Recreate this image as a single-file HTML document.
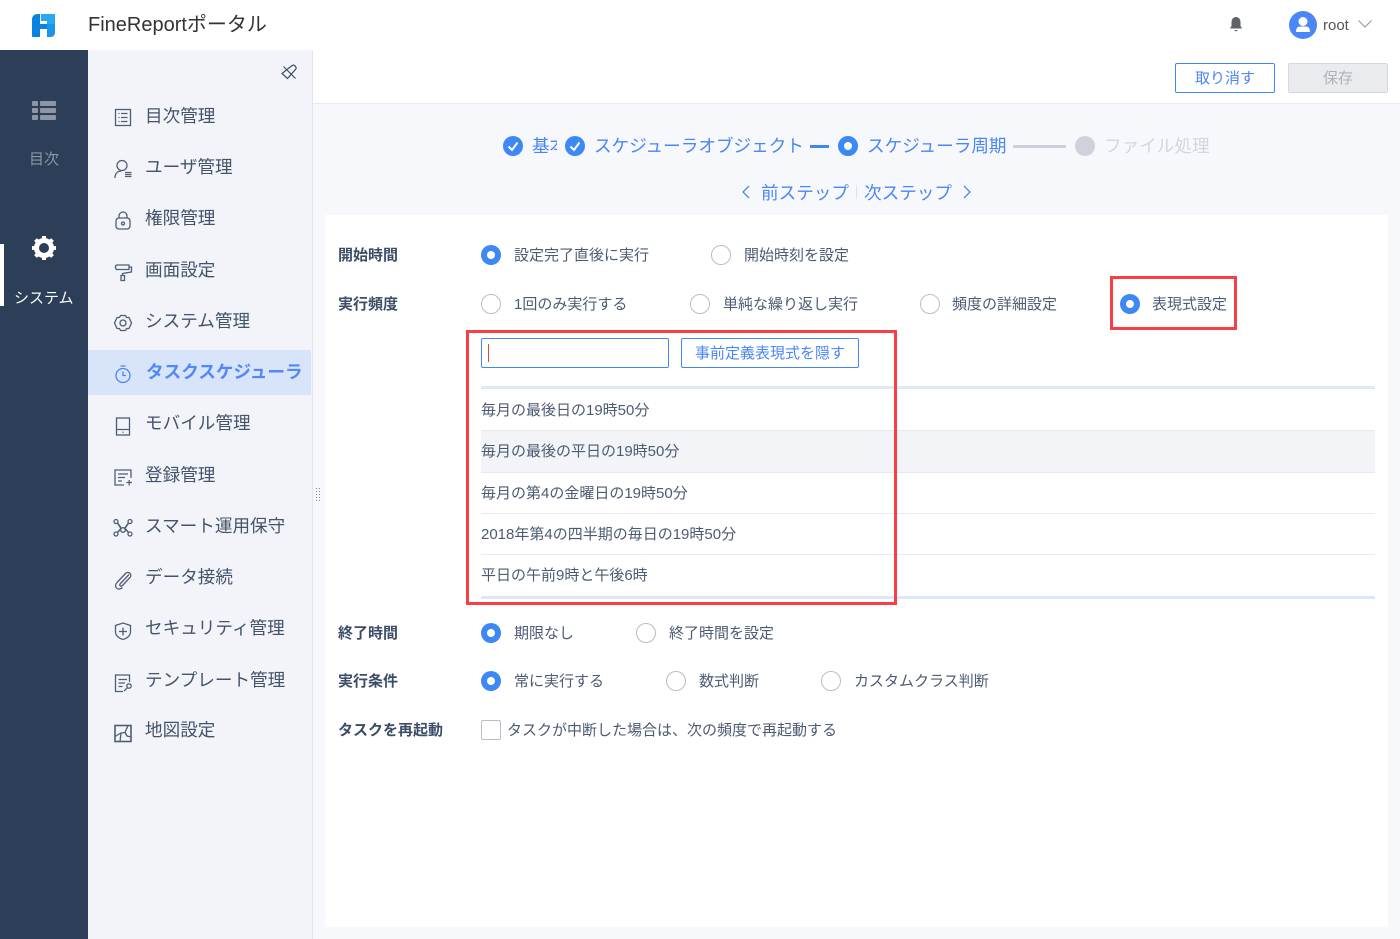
<!DOCTYPE html>
<html lang="ja"><head><meta charset="utf-8"><title>FineReport</title>
<style>
html,body{margin:0;padding:0;width:1400px;height:939px;overflow:hidden;background:#fff}
body{position:relative;font-family:"Liberation Sans","Noto Sans CJK SC","Noto Sans CJK JP",sans-serif;color:#3d4d66}
.a,.t{position:absolute}
.t{white-space:nowrap;line-height:20px}
.m{font-size:17.6px;color:#45536a;left:145px;line-height:24px}
.i{position:absolute;left:113px;width:20px;height:20px;fill:none;stroke:#4f5d75;stroke-width:1.3}
.l{font-size:15px;font-weight:bold;left:338px;color:#3d4d66;line-height:22px}
.o{font-size:15px;color:#4d5b72;line-height:22px}
.r{position:absolute;width:18px;height:18px;border:1px solid #b8bec8;border-radius:50%;background:#fff}
.c{position:absolute;width:20px;height:20px;border-radius:50%;background:#3d88f5}
.c:after{content:"";position:absolute;left:6px;top:6px;width:8px;height:8px;border-radius:50%;background:#fff}
.li{font-size:15px;color:#4d5b72;left:481px;line-height:22px}
.s{font-size:17.6px;color:#4a86f5}
.hl{position:absolute;left:481px;width:894px;height:1px;background:#e8ebf0}
</style></head><body>
<div class="a" style="left:0;top:50px;width:88px;height:889px;background:#2c3e58"></div>
<div class="a" style="left:88px;top:50px;width:224px;height:889px;background:#f2f4f9"></div>
<div class="a" style="left:312px;top:50px;width:1px;height:889px;background:#e2e5ea"></div>
<div class="a" style="left:313px;top:50px;width:1087px;height:54px;background:#fff;border-bottom:1px solid #e8eaee;box-sizing:border-box"></div>
<div class="a" style="left:313px;top:104px;width:1087px;height:835px;background:#f7f8fb"></div>
<div class="a" style="left:325px;top:215px;width:1063px;height:712px;background:#fff"></div>

<svg class="a" style="left:32px;top:14px" width="24" height="24" viewBox="0 0 24 24"><path d="M0 6Q0 0 6 0H8V23H1Q0 23 0 22ZM8 10H16V15H8Z" fill="#0a83e0"/><path d="M9 0H23V18Q23 23 18 23H15V7H9Z" fill="#2aa9ee"/><path d="M15 10H23V18Q23 23 18 23H15Z" fill="#1c97e8"/></svg>
<div class="t" style="left:88px;top:13px;font-size:20px;line-height:24px;color:#333">FineReportポータル</div>

<svg class="a" style="left:1228px;top:16px" width="16" height="17" viewBox="0 0 16 17"><path d="M8 1C5 1 3.5 3.5 3.500 6.500V10L2 12.500H14L12.500 10V6.500C12.500 3.500 11 1 8 1Z" fill="#5f6268"/><path d="M6 14H10L8 15.500Z" fill="#5f6268"/></svg>
<div class="a" style="left:1289px;top:11px;width:28px;height:28px;border-radius:50%;background:#4a86f8"></div>
<svg class="a" style="left:1289px;top:11px" width="28" height="28" viewBox="0 0 28 28"><circle cx="14" cy="10.500" r="4.500" fill="#fff"/><path d="M7 21Q7 15.500 11 15.500H17Q21 15.500 21 21Z" fill="#fff"/></svg>
<div class="t" style="left:1323px;top:16px;font-size:15px;color:#555">root</div>
<svg class="a" style="left:1357px;top:19px" width="16" height="10" viewBox="0 0 16 10"><path d="M1.500 1.500L8 8L14.500 1.500" fill="none" stroke="#9aa0aa" stroke-width="1.200"/></svg>

<svg class="a" style="left:31px;top:100px" width="26" height="22" viewBox="0 0 26 22" fill="#8d96a6"><rect x="1" y="1" width="6" height="5" rx="1"/><rect x="9" y="1" width="16" height="5" rx="1"/><rect x="1" y="8" width="6" height="5" rx="1"/><rect x="9" y="8" width="16" height="5" rx="1"/><rect x="1" y="15" width="6" height="5" rx="1"/><rect x="9" y="15" width="16" height="5" rx="1"/></svg>
<div class="t" style="left:29px;top:150px;font-size:15px;color:#8d96a6">目次</div>
<div class="a" style="left:0;top:244px;width:4px;height:62px;background:#fff"></div>
<svg class="a" style="left:31px;top:235px" width="26" height="26" viewBox="0 0 26 26"><circle cx="13" cy="13" r="7.500" fill="none" stroke="#fff" stroke-width="5"/><g stroke="#fff" stroke-width="4"><path d="M13 1V5M13 21V25M1 13H5M21 13H25M4.500 4.500L7.300 7.300M18.700 18.700L21.500 21.500M4.500 21.500L7.300 18.700M18.700 7.300L21.500 4.500"/></g></svg>
<div class="t" style="left:14px;top:289px;font-size:15px;color:#fff">システム</div>

<svg class="a" style="left:280px;top:63px" width="18" height="18" viewBox="0 0 18 18" fill="none" stroke="#3d4d66" stroke-width="1.200"><path d="M2 10.500L11.500 3Q14 1 15.500 3.500Q17 5.500 15 7L7.500 15.500ZM3.500 3.500L15.500 15.500"/></svg>

<svg class="i" style="top:107px" viewBox="0 0 20 20"><rect x="2.500" y="2.500" width="15" height="16"/><path d="M5.500 6.500H6.500M8 6.500H14.500M5.500 10.500H6.500M8 10.500H14.500M5.500 14.500H6.500M8 14.500H14.500"/></svg>
<div class="t m" style="top:104px">目次管理</div>
<svg class="i" style="top:159px" viewBox="0 0 20 20"><circle cx="9" cy="6.500" r="5"/><path d="M2 19C2 14.500 4.500 12 8.500 12M12 13.500H18.500M12 15.500H18.500M12 17.500H18.500"/></svg>
<div class="t m" style="top:155px">ユーザ管理</div>
<svg class="i" style="top:210px" viewBox="0 0 20 20"><rect x="3" y="8" width="14" height="11" rx="3"/><path d="M6 8V6A4 4 0 0 1 14 6V8"/><circle cx="10" cy="13.500" r="1.500"/></svg>
<div class="t m" style="top:206px">権限管理</div>
<svg class="i" style="top:262px" viewBox="0 0 20 20"><path d="M3.500 3H16V7.500H3.500L2.500 6V4ZM16 5H18.500V10L9.500 11.500V13M8 13.500H11.500V18.500H8Z"/></svg>
<div class="t m" style="top:258px">画面設定</div>
<svg class="i" style="top:313px" viewBox="0 0 20 20"><path d="M7.500 2.500H12.500L13.500 4.500L16 4.500L18.500 10L16 15.500L13.500 15.500L12.500 17.500H7.500L6.500 15.500L4 15.500L1.500 10L4 4.500L6.500 4.500Z" stroke-linejoin="round"/><circle cx="10" cy="10" r="3"/></svg>
<div class="t m" style="top:309px">システム管理</div>

<div class="a" style="left:88px;top:350px;width:223px;height:45px;background:#d8e4f9"></div>
<svg class="i" style="top:364px;stroke:#4a86f5" viewBox="0 0 20 20"><circle cx="10" cy="11.500" r="7"/><path d="M10 7.500V11.500H13M7.500 2H12.500"/></svg>
<div class="t m" style="top:360px;left:146px;font-size:17.6px;font-weight:bold;color:#5288f7">タスクスケジューラ</div>

<svg class="i" style="top:416px" viewBox="0 0 20 20"><rect x="3.500" y="2" width="13" height="17"/><path d="M3.500 13.500H16.500M9.500 16.300H10.500"/></svg>
<div class="t m" style="top:411px">モバイル管理</div>
<svg class="i" style="top:467px" viewBox="0 0 20 20"><path d="M18 11V3H2V18H11M5 7H15M5 10.500H12M5 14H9M13.500 15.500H19M16.200 13V18.500"/></svg>
<div class="t m" style="top:463px">登録管理</div>
<svg class="i" style="top:518px" viewBox="0 0 20 20"><circle cx="3" cy="3.500" r="2"/><circle cx="17" cy="3.500" r="2"/><circle cx="3" cy="16" r="2"/><circle cx="17" cy="16" r="2"/><circle cx="10" cy="12" r="2.300"/><path d="M4.500 5L8.300 10.500M15.500 5L11.700 10.500M4.500 14.500L8 10.500M15.500 14.500L12 10.500" stroke-width="1.600"/></svg>
<div class="t m" style="top:514px">スマート運用保守</div>
<svg class="i" style="top:570px" viewBox="0 0 20 20"><path d="M16 4.500L7.500 13.500C5.500 15.500 8 17 9.500 15.500L17 7.500C19.500 4.500 15.500 .5 12.500 3.500L4 12.500C0 17 5.500 21.500 9.500 17.500"/></svg>
<div class="t m" style="top:565px">データ接続</div>
<svg class="i" style="top:621px" viewBox="0 0 20 20"><path d="M10 2L17.500 4.500V11C17.500 15 13.500 17.500 10 18.500C6.500 17.500 2.500 15 2.500 11V4.500ZM6 10.500H14M10 6.500V14.500"/></svg>
<div class="t m" style="top:616px">セキュリティ管理</div>
<svg class="i" style="top:673px" viewBox="0 0 20 20"><path d="M16.500 9V2H2.500V18.500H10M5.500 6.500H14M5.500 10H12M5.500 13.500H9.500"/><circle cx="16" cy="13" r="2.200"/><path d="M14.500 14.700L11 18"/></svg>
<div class="t m" style="top:668px">テンプレート管理</div>
<svg class="i" style="top:723px" viewBox="0 0 20 20"><rect x="2" y="2.500" width="16" height="16" stroke-width="1.600"/><path d="M2 13.500L8 10L12 9.500L15 2.500M12 9.500L14 13L18 14M8 10L7 18.500"/></svg>
<div class="t m" style="top:718px">地図設定</div>

<svg class="a" style="left:315px;top:487px" width="7" height="16" fill="#7b8593"><path d="M1 1h1v1H1zM4 1h1v1H4zM1 4h1v1H1zM4 4h1v1H4zM1 7h1v1H1zM4 7h1v1H4zM1 10h1v1H1zM4 10h1v1H4zM1 13h1v1H1zM4 13h1v1H4z"/></svg>

<div class="a" style="left:1175px;top:63px;width:100px;height:30px;box-sizing:border-box;border:1px solid #3d88f5;border-radius:2px;background:#fff;color:#4a86f5;font-size:15px;text-align:center;line-height:30px">取り消す</div>
<div class="a" style="left:1288px;top:63px;width:100px;height:30px;box-sizing:border-box;border:1px solid #d4d7dc;border-radius:2px;background:#eaebef;color:#adb1b8;font-size:15px;text-align:center;line-height:30px">保存</div>

<svg class="a" style="left:503px;top:136px" width="20" height="20"><circle cx="10" cy="10" r="10" fill="#3d88f5"/><path d="M5.500 10.500L9 14L14.500 6.500" fill="none" stroke="#fff" stroke-width="2"/></svg>
<div class="a" style="left:532px;top:133px;width:25px;height:26px;overflow:hidden"><div class="t s" style="left:0;top:3px">基本設定</div></div>
<svg class="a" style="left:565px;top:136px" width="20" height="20"><circle cx="10" cy="10" r="10" fill="#3d88f5"/><path d="M5.500 10.500L9 14L14.500 6.500" fill="none" stroke="#fff" stroke-width="2"/></svg>
<div class="t s" style="left:594px;top:136px">スケジューラオブジェクト</div>
<div class="a" style="left:810px;top:145px;width:19px;height:3px;background:#3d88f5"></div>
<div class="a" style="left:838px;top:136px;width:20px;height:20px;border-radius:50%;box-sizing:border-box;border:6px solid #3d88f5;background:#fff"></div>
<div class="t s" style="left:867px;top:136px">スケジューラ周期</div>
<div class="a" style="left:1013px;top:145px;width:53px;height:3px;background:#ccd0d8"></div>
<div class="a" style="left:1075px;top:136px;width:20px;height:20px;border-radius:50%;background:#cfd2da"></div>
<div class="t s" style="left:1104px;top:136px;color:#d3d6dc">ファイル処理</div>

<svg class="a" style="left:740px;top:184px" width="12" height="16"><path d="M9 2L3 8L9 14" fill="none" stroke="#4a86f5" stroke-width="1.300"/></svg>
<div class="t s" style="left:761px;top:183px">前ステップ</div>
<div class="a" style="left:856px;top:185px;width:1px;height:14px;background:#dfe3ea"></div>
<div class="t s" style="left:864px;top:183px">次ステップ</div>
<svg class="a" style="left:961px;top:184px" width="12" height="16"><path d="M3 2L9 8L3 14" fill="none" stroke="#4a86f5" stroke-width="1.300"/></svg>

<div class="t l" style="top:245px">開始時間</div>
<div class="c" style="left:481px;top:245px"></div><div class="t o" style="left:514px;top:245px">設定完了直後に実行</div>
<div class="r" style="left:711px;top:245px"></div><div class="t o" style="left:744px;top:245px">開始時刻を設定</div>

<div class="t l" style="top:294px">実行頻度</div>
<div class="r" style="left:481px;top:294px"></div><div class="t o" style="left:514px;top:294px">1回のみ実行する</div>
<div class="r" style="left:690px;top:294px"></div><div class="t o" style="left:723px;top:294px">単純な繰り返し実行</div>
<div class="r" style="left:920px;top:294px"></div><div class="t o" style="left:952px;top:294px">頻度の詳細設定</div>
<div class="c" style="left:1120px;top:294px"></div><div class="t o" style="left:1152px;top:294px">表現式設定</div>
<div class="a" style="left:1110px;top:276px;width:127px;height:54px;box-sizing:border-box;border:3px solid #f73f45"></div>

<div class="a" style="left:481px;top:338px;width:188px;height:30px;box-sizing:border-box;border:1px solid #3d88f5;border-radius:2px;background:#fff"></div>
<div class="a" style="left:488px;top:344px;width:1px;height:18px;background:#e0433a"></div>
<div class="a" style="left:681px;top:338px;width:178px;height:30px;box-sizing:border-box;border:1px solid #3d88f5;border-radius:2px;background:#fff;color:#4a86f5;font-size:15px;text-align:center;line-height:30px">事前定義表現式を隠す</div>

<div class="a" style="left:481px;top:386px;width:894px;height:3px;background:#dde9f7"></div>
<div class="t li" style="top:400px">毎月の最後日の19時50分</div>
<div class="a" style="left:481px;top:430px;width:894px;height:43px;box-sizing:border-box;background:#f2f4f8;border-top:1px solid #e6e9ee;border-bottom:1px solid #e6e9ee"></div>
<div class="t li" style="top:441px">毎月の最後の平日の19時50分</div>
<div class="t li" style="top:483px">毎月の第4の金曜日の19時50分</div>
<div class="hl" style="top:513px"></div>
<div class="t li" style="top:524px">2018年第4の四半期の毎日の19時50分</div>
<div class="hl" style="top:554px"></div>
<div class="t li" style="top:565px">平日の午前9時と午後6時</div>
<div class="a" style="left:481px;top:596px;width:894px;height:3px;background:#dde9f7"></div>
<div class="a" style="left:466px;top:330px;width:431px;height:275px;box-sizing:border-box;border:3px solid #f73f45"></div>

<div class="t l" style="top:623px">終了時間</div>
<div class="c" style="left:481px;top:623px"></div><div class="t o" style="left:514px;top:623px">期限なし</div>
<div class="r" style="left:636px;top:623px"></div><div class="t o" style="left:669px;top:623px">終了時間を設定</div>

<div class="t l" style="top:671px">実行条件</div>
<div class="c" style="left:481px;top:671px"></div><div class="t o" style="left:514px;top:671px">常に実行する</div>
<div class="r" style="left:666px;top:671px"></div><div class="t o" style="left:699px;top:671px">数式判断</div>
<div class="r" style="left:821px;top:671px"></div><div class="t o" style="left:854px;top:671px">カスタムクラス判断</div>

<div class="t l" style="top:720px">タスクを再起動</div>
<div class="a" style="left:481px;top:720px;width:20px;height:20px;box-sizing:border-box;border:1px solid #b8bec8;border-radius:2px;background:#fff"></div>
<div class="t o" style="left:507px;top:720px">タスクが中断した場合は、次の頻度で再起動する</div>
</body></html>
